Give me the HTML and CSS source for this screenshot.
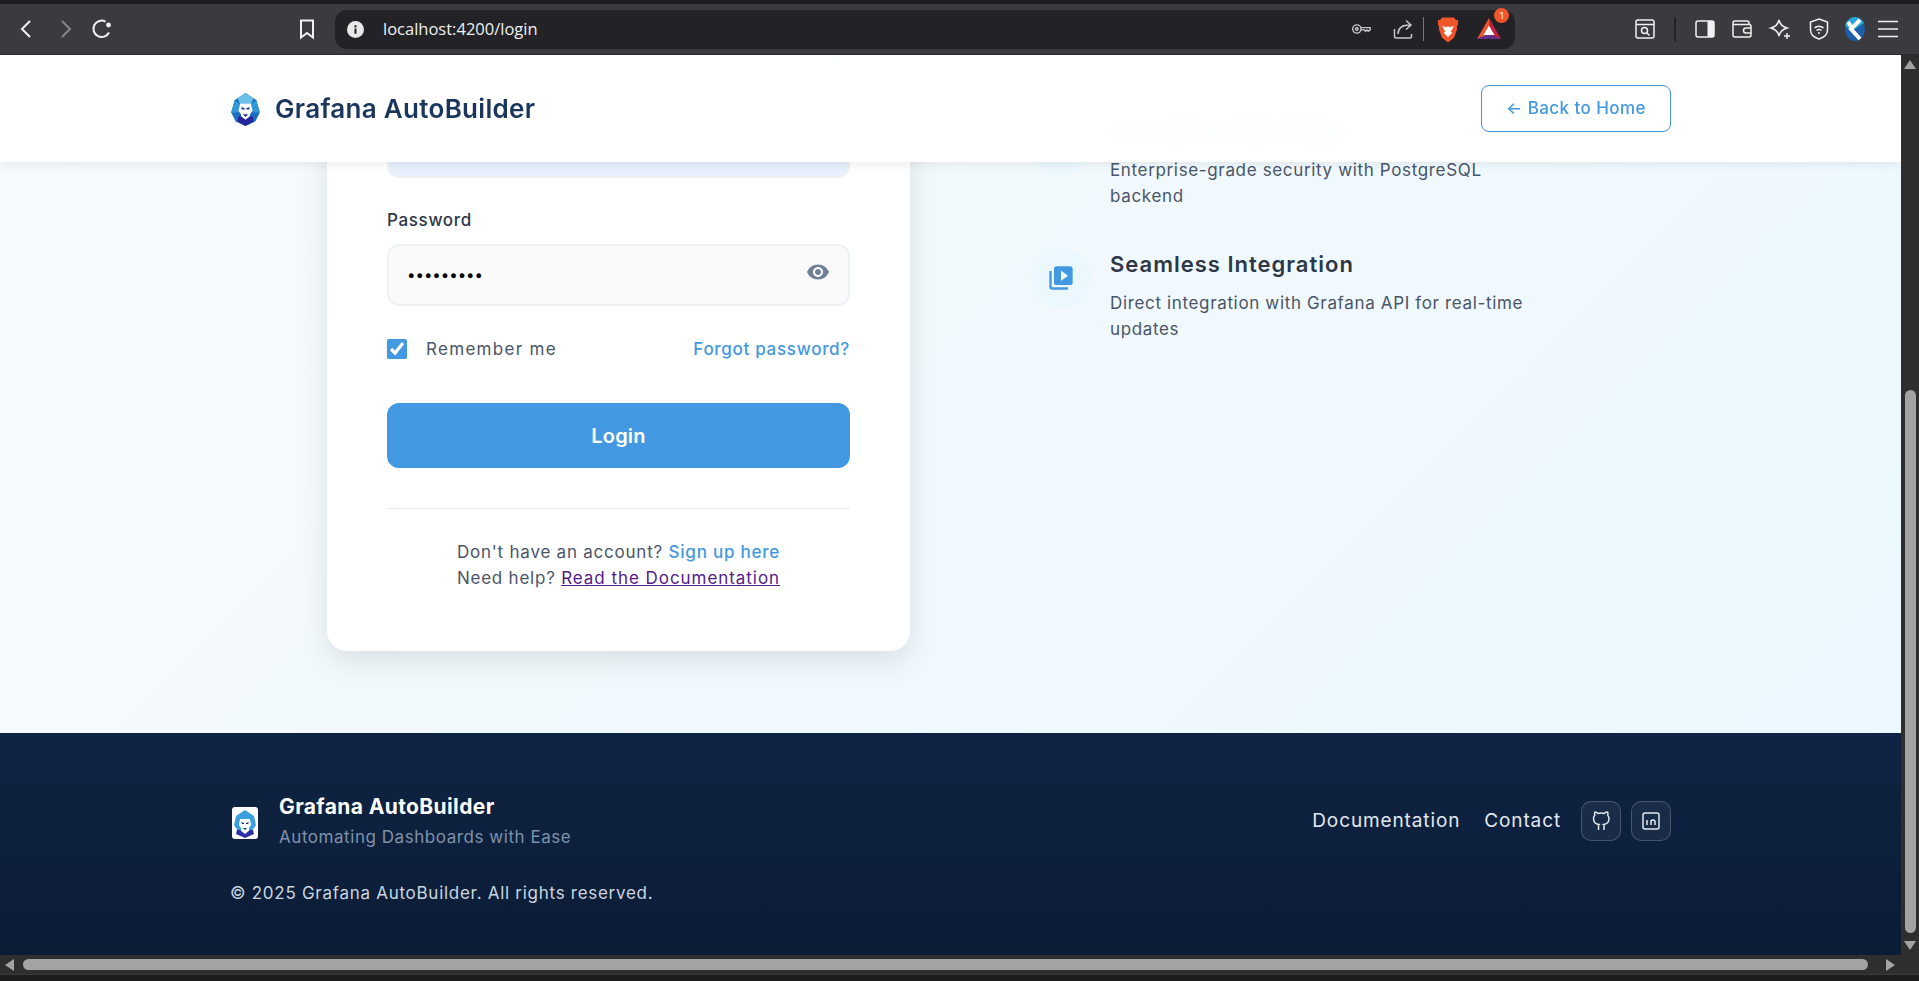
FILE: index.html
```html
<!DOCTYPE html>
<html lang="en">
<head>
    <meta charset="UTF-8">
    <meta name="viewport" content="width=device-width, initial-scale=1.0">
    <title>Grafana AutoBuilder - Login</title>
    <link rel="stylesheet" href="styles.css">
</head>
<body>
    <!-- browser toolbar -->
    <div class="top-strip"></div>
    <div class="toolbar">
        <svg class="tool-icon back" viewBox="0 0 24 24"><path d="M15 4l-8 8 8 8" /></svg>
        <svg class="tool-icon forward" viewBox="0 0 24 24"><path d="M9 4l8 8-8 8" /></svg>
        <svg class="tool-icon reload" viewBox="0 0 24 24"><path d="M19 15.5A8.2 8.2 0 1 1 15.5 4.6" /><circle class="fill-white" cx="18.5" cy="8" r="2.4" /></svg>
        <svg class="tool-icon bookmark" viewBox="0 0 24 24"><path d="M6 3.5h12v17l-6-4.5-6 4.5z" /></svg>
        <div class="address-bar">
            <svg class="info-icon" viewBox="0 0 16 16"><circle cx="8" cy="8" r="8" fill="#e8e8e8" /><rect x="7" y="7" width="2" height="5" fill="#26262b" /><rect x="7" y="4" width="2" height="2" fill="#26262b" /></svg>
            <span class="url">localhost:4200/login</span>
            <svg class="tool-icon thin key" viewBox="0 0 24 24"><circle cx="7.5" cy="12" r="4.5" /><circle cx="7.5" cy="12" r="1.4" /><path d="M12 10.5h10v2.5l-2 1.5-1.5-1.5-1.5 1.5-1.5-1.5H12" /></svg>
            <svg class="tool-icon thin share" viewBox="0 0 24 24"><path d="M3.500 12v7.500a1.500 1.500 0 0 0 1.500 1.500h14a1.500 1.500 0 0 0 1.500-1.500V17M7 17c0-6 3.500-9 12-9M15 3.500l5 4.500-5 4.500" /></svg>
            <span class="bar-sep"></span>
            <svg class="brave" viewBox="0 0 24 24"><path fill="#f1562b" d="M6.500 1h11l2 2.500 2-.5-.5 5.500-1 1 .5 2-3 8L12 24l-5.500-4.500-3-8 .5-2-1-1L2.500 3l2 .5z" /><path fill="#fff" d="M6.500 8.500l4 1.500L12 9l1.500 1 4-1.500-3 5.500 1.500 1-4 4-4-4 1.500-1z" /></svg>
            <div class="bat">
                <svg viewBox="0 0 24 24"><path fill="#f0552b" d="M12 1L0 22l12-5z" /><path fill="#c3223f" d="M12 1l12 21-12-5z" /><path fill="#662d91" d="M0 22h24l-12-5z" /><path fill="#fff" d="M12 8.500l5.500 9.500h-11z" /></svg>
                <span class="badge">1</span>
            </div>
        </div>
        <svg class="tool-icon thin capture" viewBox="0 0 24 24"><rect x="3" y="3" width="18" height="18" rx="2" /><path d="M3 7.500h18" /><circle cx="11.500" cy="13.500" r="3" /><path d="M14 16l2.500 2.500" /></svg>
        <span class="tool-sep"></span>
        <svg class="tool-icon thin sidebar" viewBox="0 0 24 24"><rect x="3" y="4" width="18" height="16" rx="2" /><rect class="fill-white" x="14.500" y="4" width="6.500" height="16" /></svg>
        <svg class="tool-icon thin wallet" viewBox="0 0 24 24"><path d="M5 4h12a2 2 0 0 1 2 2v1.500M5 4a2 2 0 0 0-2 2v12a2 2 0 0 0 2 2h14a2 2 0 0 0 2-2V9.500a2 2 0 0 0-2-2H3M21 11h-5a2.500 2.500 0 0 0 0 5h5" /></svg>
        <svg class="tool-icon thin stars" viewBox="0 0 24 24"><path d="M11 3c1 4.500 3 6.700 8 8-4.500 1.300-7 3.500-8 8-1-4.500-3.500-6.700-8-8 5-1.300 7-3.500 8-8z" /><path d="M19 16v6M16 19h6" /></svg>
        <svg class="tool-icon thin vpn" viewBox="0 0 24 24"><path d="M12 2l8.500 3v8c0 4.500-3.500 7.500-8.500 9-5-1.500-8.500-4.500-8.500-9V5z" /><path d="M7.500 11c2.500-2.500 6.500-2.500 9 0M9.500 13.500c1.500-1.200 3.500-1.200 5 0" /><circle class="fill-white" cx="12" cy="16" r="1" /></svg>
        <svg class="kite" viewBox="0 0 24 24"><ellipse cx="12" cy="12" rx="10" ry="12" fill="#1d5fa8" /><path fill="#2aa6d6" d="M12 0c4 0 7 2 9 6L9 14 2 9C3 4 7 0 12 0z" /><path fill="none" stroke="#fff" stroke-width="4" d="M17 3L8 12l9 10M5 5l4 6" /></svg>
        <svg class="tool-icon thin menu" viewBox="0 0 24 24"><path d="M2 4.500h20M2 12h20M2 19.500h20" /></svg>
    </div>

    <div class="viewport">
        <div class="page">
            <nav class="navbar">
                <a class="brand" href="#">
                    <svg class="lion" viewBox="0 0 32 38">
                        <path fill="#1a6fc0" d="M4 9L16 1l12 8 4 14-5 10-11 5-11-5-5-10z" />
                        <path fill="#6cc0e8" d="M7 7L16 1l9 6-3 7H10z" />
                        <path fill="#2e9bd8" d="M4 9l6 5-3 9H0zM28 9l-6 5 3 9h7z" />
                        <path fill="#fff" d="M10 13h12l2 8-3 4v5l-5 2-5-2v-5l-3-4z" />
                        <path fill="#1c2f8f" d="M11 17l4 1v1.500h-3zM21 17l-4 1v1.500h3zM13 25h6l-3 3z" />
                        <path fill="#27259b" d="M8 27l3 0 5 4 5-4 3 0 1 6-9 5-9-5z" />
                    </svg>
                    <span class="brand-name">Grafana AutoBuilder</span>
                </a>
                <a class="back-link" href="#">← Back to Home</a>
            </nav>

            <main class="auth-section">
                <div class="login-card">
                    <div class="email-stub"></div>
                    <label class="field-label" for="password">Password</label>
                    <div class="password-box">
                        <input id="password" class="password-input" type="password" value="secret123">
                        <svg class="eye" viewBox="0 0 24 24"><path d="M12 4.500C7 4.500 2.730 7.610 1 12c1.730 4.390 6 7.500 11 7.500s9.270-3.110 11-7.500c-1.730-4.390-6-7.500-11-7.500zM12 17c-2.760 0-5-2.240-5-5s2.240-5 5-5 5 2.240 5 5-2.240 5-5 5zm0-8c-1.660 0-3 1.340-3 3s1.340 3 3 3 3-1.340 3-3-1.340-3-3-3z" /></svg>
                    </div>
                    <div class="form-row">
                        <label class="remember"><input type="checkbox" checked> Remember me</label>
                        <a class="forgot" href="#">Forgot password?</a>
                    </div>
                    <button class="login-btn" type="button">Login</button>
                    <hr class="divider">
                    <p class="help-text">
                        Don't have an account? <a class="signup" href="#">Sign up here</a><br>
                        Need help? <a class="docs-link" href="#">Read the Documentation</a>
                    </p>
                </div>

                <div class="features">
                    <div class="feature">
                        <div class="feature-icon"></div>
                        <div class="feature-text">
                            <h3>Secure Data Storage</h3>
                            <p>Enterprise-grade security with PostgreSQL backend</p>
                        </div>
                    </div>
                    <div class="feature">
                        <div class="feature-icon">
                            <svg viewBox="0 0 24 24"><path d="M4 6H2v14c0 1.100.9 2 2 2h14v-2H4V6zm16-4H8c-1.100 0-2 .9-2 2v12c0 1.100.9 2 2 2h12c1.100 0 2-.9 2-2V4c0-1.100-.9-2-2-2zm-8 12.500v-9l6 4.500-6 4.500z" /></svg>
                        </div>
                        <div class="feature-text">
                            <h3>Seamless Integration</h3>
                            <p>Direct integration with Grafana API for real-time updates</p>
                        </div>
                    </div>
                </div>
            </main>

            <footer class="footer">
                <div class="footer-top">
                    <div class="footer-brand">
                        <svg class="footer-logo" viewBox="0 0 26 32">
                            <rect width="26" height="32" rx="3" fill="#fff" />
                            <path fill="#3aa0dc" d="M4 9l9-6 9 6 2 9-4 6H6l-4-6z" />
                            <path fill="#fff" d="M8 12h10l1 6-2 3v4l-4 2-4-2v-4l-2-3z" />
                            <path fill="#1c2f8f" d="M9 15l3 1v1h-2zM17 15l-3 1v1h2zM11 21h4l-2 2z" />
                            <path fill="#2b2fa5" d="M5 23h3l5 4 5-4h3l1 4-9 4-9-4z" />
                        </svg>
                        <div>
                            <div class="footer-name">Grafana AutoBuilder</div>
                            <div class="footer-tagline">Automating Dashboards with Ease</div>
                        </div>
                    </div>
                    <div class="footer-links">
                        <a href="#">Documentation</a>
                        <a href="#">Contact</a>
                        <div class="social">
                            <a class="social-btn" href="#"><svg viewBox="0 0 24 24"><path d="M15 21v-3.500c0-1 .1-1.400-.5-2 2.800-.3 5.500-1.400 5.500-6a4.600 4.600 0 0 0-1.300-3.200 4.200 4.200 0 0 0-.1-3.200s-1.100-.3-3.500 1.300a12.300 12.300 0 0 0-6.200 0C7 2.800 5.900 3.100 5.900 3.100a4.200 4.200 0 0 0-.1 3.200A4.600 4.600 0 0 0 4.500 9.500c0 4.600 2.700 5.700 5.500 6-.6.6-.6 1.200-.5 2V21" /></svg></a>
                            <a class="social-btn" href="#"><svg viewBox="0 0 24 24"><rect x="4" y="4" width="16" height="16" rx="2" /><path d="M8 11v5M8 8v.01M12 16v-5M16 16v-3a2 2 0 0 0-4 0" /></svg></a>
                        </div>
                    </div>
                </div>
                <p class="copyright">© 2025 Grafana AutoBuilder. All rights reserved.</p>
            </footer>
        </div>

        <!-- vertical scrollbar -->
        <div class="v-scroll">
            <span class="arrow arrow-up"></span>
            <div class="v-track"><div class="v-thumb"></div></div>
            <span class="arrow arrow-down"></span>
        </div>
    </div>

    <!-- horizontal scrollbar -->
    <div class="h-scroll">
        <span class="arrow arrow-left"></span>
        <div class="h-thumb"></div>
        <span class="arrow arrow-right"></span>
    </div>
    <div class="bottom-strip"></div>
</body>
</html>
```

FILE: styles.css
```css
html, body {
    height: 100%;
    margin: 0;
    padding: 0;
    overflow: hidden;
}
body {
    display: flex;
    flex-direction: column;
    font-family: 'Inter', 'Noto Sans', sans-serif;
    font-size: 17px;
    letter-spacing: 0.65px;
    line-height: 25.6px;
    background-color: #1c1c1e;
}
a {
    text-decoration: none;
}

/* browser chrome */
.top-strip {
    height: 4px;
    background-color: #1b1b20;
}
.toolbar {
    height: 50px;
    padding-left: 15px;
    display: flex;
    align-items: center;
    background-color: #3b3a3f;
    border-bottom: 1px solid #2a2a2d;
    letter-spacing: 0;
}
.tool-icon {
    width: 24px;
    height: 24px;
    flex: none;
    fill: none;
    stroke: #f1f1f1;
    stroke-width: 2;
}
.tool-icon.thin {
    stroke-width: 1.5;
}
.fill-white {
    fill: #f1f1f1;
    stroke: none;
}
.forward {
    margin-left: 14px;
    stroke: #85858a;
}
.reload {
    margin-left: 13px;
}
.bookmark {
    margin-left: 181px;
}
.address-bar {
    width: 1180px;
    height: 39px;
    margin-left: 16px;
    padding-left: 12px;
    box-sizing: border-box;
    display: flex;
    align-items: center;
    background-color: #222227;
    border-radius: 12px;
}
.info-icon {
    width: 17px;
    height: 17px;
}
.url {
    margin-left: 19px;
    width: 967px;
    font-family: 'Open Sans', sans-serif;
    font-size: 16.5px;
    color: #f0f0f0;
}
.key {
    stroke: #c8c8c8;
    width: 22px;
}
.share {
    margin-left: 19px;
    stroke: #c8c8c8;
}
.bar-sep {
    width: 1px;
    height: 24px;
    margin-left: 8px;
    background-color: #77777b;
}
.brave {
    width: 26px;
    height: 27px;
    margin-left: 11px;
}
.bat {
    position: relative;
    width: 24px;
    height: 24px;
    margin-left: 16px;
}
.bat svg {
    display: block;
}
.badge {
    position: absolute;
    top: -9px;
    right: -8px;
    width: 15px;
    height: 15px;
    border-radius: 50%;
    background-color: #f0552b;
    color: #fff;
    font-size: 9px;
    line-height: 15px;
    text-align: center;
}
.capture {
    margin-left: 118px;
}
.tool-sep {
    width: 2px;
    height: 24px;
    margin-left: 17px;
    background-color: #222225;
}
.sidebar {
    margin-left: 17px;
}
.wallet {
    margin-left: 13px;
}
.stars {
    margin-left: 14px;
}
.vpn {
    margin-left: 15px;
}
.kite {
    width: 24px;
    height: 24px;
    margin-left: 12px;
}
.menu {
    margin-left: 9px;
}

/* page area */
.viewport {
    flex: 1;
    min-height: 0;
    display: flex;
}
.page {
    position: relative;
    flex: 1;
    min-width: 0;
    display: flex;
    flex-direction: column;
    overflow: hidden;
    background-color: #fff;
}
.navbar {
    position: absolute;
    top: 0;
    left: 0;
    right: 0;
    z-index: 10;
    height: 107px;
    padding: 0 230px;
    display: flex;
    align-items: center;
    justify-content: space-between;
    background-color: rgba(255, 255, 255, 0.97);
    backdrop-filter: blur(10px);
    box-shadow: 0 2px 10px rgba(0, 0, 0, 0.08);
}
.brand {
    display: flex;
    align-items: center;
}
.lion {
    width: 31px;
    height: 34px;
    margin-right: 14px;
}
.brand-name {
    font-size: 26px;
    font-weight: 600;
    color: #1a365d;
    letter-spacing: 0.3px;
}
.back-link {
    width: 190px;
    height: 47px;
    box-sizing: border-box;
    display: flex;
    align-items: center;
    justify-content: center;
    border: 1px solid #4299e1;
    border-radius: 8px;
    color: #4299e1;
    font-size: 17px;
    font-weight: 500;
    letter-spacing: 0.43px;
}

.auth-section {
    height: 678px;
    flex: none;
    box-sizing: border-box;
    padding-left: 327px;
    display: flex;
    gap: 121px;
    background: linear-gradient(135deg, #f7fafc 0%, #ebf8ff 100%);
}
.login-card {
    width: 583px;
    height: 596px;
    box-sizing: border-box;
    padding: 0 60px;
    background-color: #fff;
    border-radius: 0 0 20px 20px;
    box-shadow: 0 10px 30px rgba(0, 0, 0, 0.1);
}
.email-stub {
    height: 123px;
    margin-bottom: 30px;
    background-color: #e8f0fe;
    border: 2px solid #edf2f7;
    border-top: 0;
    border-radius: 0 0 12px 12px;
    box-sizing: border-box;
}
.field-label {
    display: block;
    margin-bottom: 10px;
    font-weight: 500;
    color: #2d3748;
}
.password-box {
    position: relative;
}
.password-input {
    display: block;
    width: 100%;
    height: 62px;
    box-sizing: border-box;
    padding: 0 18px;
    font-family: 'Inter', sans-serif;
    font-size: 15px;
    background-color: #fafafa;
    border: 2px solid #edf2f7;
    border-radius: 12px;
}
.eye {
    position: absolute;
    top: 16px;
    right: 20px;
    width: 24px;
    height: 24px;
    fill: #718096;
}
.form-row {
    margin-top: 31px;
    display: flex;
    align-items: center;
    justify-content: space-between;
}
.remember {
    display: flex;
    align-items: center;
    gap: 19px;
    color: #4a5568;
    letter-spacing: 1.3px;
}
.remember input {
    width: 20px;
    height: 20px;
    margin: 0;
    accent-color: #4299e1;
}
.forgot {
    color: #4299e1;
    font-weight: 500;
    letter-spacing: 0.7px;
}
.login-btn {
    display: block;
    width: 100%;
    height: 65px;
    margin-top: 41px;
    border: none;
    border-radius: 12px;
    background-color: #4299e1;
    color: #fff;
    font-family: 'Inter', sans-serif;
    font-size: 20px;
    font-weight: 600;
    letter-spacing: 0.2px;
}
.divider {
    margin: 40px 0 31px;
    border: none;
    border-top: 1px solid #e2e8f0;
}
.help-text {
    margin: 0;
    text-align: center;
    color: #4a5568;
    letter-spacing: 0.77px;
}
.signup {
    color: #4299e1;
    font-weight: 500;
}
.docs-link {
    color: #551a8b;
    text-decoration: underline;
    letter-spacing: 0.95px;
}

.features {
    padding-top: 60px;
    display: flex;
    flex-direction: column;
    gap: 33px;
}
.feature {
    width: 510px;
    height: 100px;
    display: flex;
    gap: 19px;
}
.feature-icon {
    width: 60px;
    height: 60px;
    flex: none;
    display: flex;
    align-items: center;
    justify-content: center;
    border-radius: 50%;
    background-color: #ebf8ff;
}
.feature-icon svg {
    width: 28px;
    height: 28px;
    fill: #4299e1;
}
.feature-text {
    width: 431px;
}
.feature-text h3 {
    margin: 0 0 11px;
    font-size: 22px;
    font-weight: 600;
    line-height: 32px;
    letter-spacing: 1px;
    color: #2d3748;
}
.feature-text p {
    margin: 0;
    color: #4a5568;
}

.footer {
    flex: 1;
    padding: 58px 230px 0;
    background: linear-gradient(180deg, #0f2444 0%, #0b1c35 100%);
}
.footer-top {
    display: flex;
    align-items: center;
    justify-content: space-between;
}
.footer-brand {
    display: flex;
    align-items: center;
    gap: 21px;
    padding-left: 2px;
}
.footer-logo {
    width: 26px;
    height: 32px;
    margin-top: 4px;
}
.footer-name {
    font-size: 21px;
    font-weight: 700;
    line-height: 32px;
    letter-spacing: 0.38px;
    color: #fff;
}
.footer-tagline {
    margin-top: 2px;
    color: #7f92ab;
    letter-spacing: 0.55px;
}
.footer-links {
    display: flex;
    align-items: center;
    gap: 24px;
}
.footer-links > a {
    font-size: 19px;
    color: #e2e8f0;
    letter-spacing: 0.88px;
}
.social {
    display: flex;
    gap: 10px;
    margin-left: -4px;
}
.social-btn {
    width: 40px;
    height: 40px;
    box-sizing: border-box;
    display: flex;
    align-items: center;
    justify-content: center;
    border: 1px solid rgba(255, 255, 255, 0.2);
    border-radius: 10px;
    background-color: rgba(255, 255, 255, 0.05);
}
.social-btn svg {
    width: 24px;
    height: 24px;
    fill: none;
    stroke: #e2e8f0;
    stroke-width: 1.5;
}
.copyright {
    margin: 30px 0 0;
    color: #cbd5e0;
    letter-spacing: 0.72px;
}

/* scrollbars */
.v-scroll {
    width: 18px;
    flex: none;
    display: flex;
    flex-direction: column;
    align-items: center;
    background-color: #2e2e2e;
}
.v-track {
    flex: 1;
    width: 100%;
    display: flex;
    flex-direction: column;
    justify-content: flex-end;
    align-items: center;
}
.v-thumb {
    width: 11px;
    height: 543px;
    border-radius: 6px;
    background-color: #a3a3a3;
}
.arrow {
    width: 0;
    height: 0;
    flex: none;
    border-style: solid;
    border-color: transparent;
}
.arrow-up {
    margin: 5px 0 0;
    border-width: 0 6px 9px;
    border-bottom-color: #a3a3a3;
}
.arrow-down {
    margin: 8px 0 5px;
    border-width: 9px 6px 0;
    border-top-color: #a3a3a3;
}
.h-scroll {
    height: 19px;
    flex: none;
    padding-left: 5px;
    display: flex;
    align-items: center;
    background-color: #2e2e2e;
}
.arrow-left {
    border-width: 6px 9px 6px 0;
    border-right-color: #a3a3a3;
}
.h-thumb {
    width: 1845px;
    height: 11px;
    margin-left: 9px;
    border-radius: 6px;
    background-color: #a3a3a3;
}
.arrow-right {
    margin-left: 18px;
    border-width: 6px 0 6px 9px;
    border-left-color: #a3a3a3;
}
.bottom-strip {
    height: 7px;
    flex: none;
    background-color: #1c1c1c;
    border-top: 1px solid #3a3a3a;
    box-sizing: border-box;
}
```
